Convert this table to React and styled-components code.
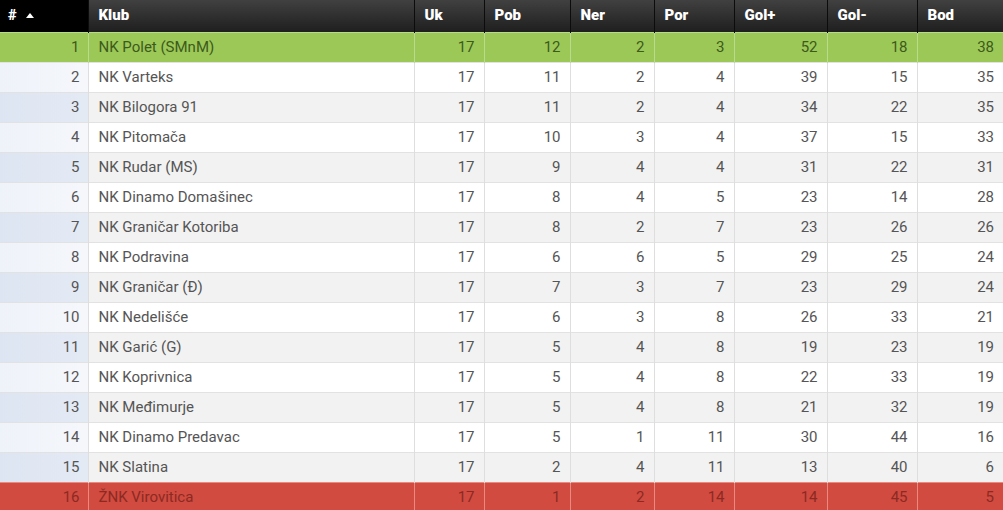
import styled, { createGlobalStyle } from "styled-components";

const GlobalStyle = createGlobalStyle`
  body {
    margin: 0;
    background: #fff;
    font-family: Roboto, "Liberation Sans", sans-serif;
  }
`;

const cols = [
  { key: "pos", label: "#", width: 88 },
  { key: "name", label: "Klub", width: 326 },
  { key: "uk", label: "Uk", width: 70 },
  { key: "pob", label: "Pob", width: 86 },
  { key: "ner", label: "Ner", width: 84 },
  { key: "por", label: "Por", width: 80 },
  { key: "gp", label: "Gol+", width: 93 },
  { key: "gm", label: "Gol-", width: 90 },
  { key: "bod", label: "Bod", width: 86 },
];

const rows = [
  ["NK Polet (SMnM)", 17, 12, 2, 3, 52, 18, 38],
  ["NK Varteks", 17, 11, 2, 4, 39, 15, 35],
  ["NK Bilogora 91", 17, 11, 2, 4, 34, 22, 35],
  ["NK Pitomača", 17, 10, 3, 4, 37, 15, 33],
  ["NK Rudar (MS)", 17, 9, 4, 4, 31, 22, 31],
  ["NK Dinamo Domašinec", 17, 8, 4, 5, 23, 14, 28],
  ["NK Graničar Kotoriba", 17, 8, 2, 7, 23, 26, 26],
  ["NK Podravina", 17, 6, 6, 5, 29, 25, 24],
  ["NK Graničar (Đ)", 17, 7, 3, 7, 23, 29, 24],
  ["NK Nedelišće", 17, 6, 3, 8, 26, 33, 21],
  ["NK Garić (G)", 17, 5, 4, 8, 19, 23, 19],
  ["NK Koprivnica", 17, 5, 4, 8, 22, 33, 19],
  ["NK Međimurje", 17, 5, 4, 8, 21, 32, 19],
  ["NK Dinamo Predavac", 17, 5, 1, 11, 30, 44, 16],
  ["NK Slatina", 17, 2, 4, 11, 13, 40, 6],
  ["ŽNK Virovitica", 17, 1, 2, 14, 14, 45, 5],
];

const Table = styled.table`
  width: 1003px;
  border-collapse: collapse;
  table-layout: fixed;
  font-size: 15px;
`;

const HeadRow = styled.tr`
  height: 32px;
`;

const HeadCell = styled.th`
  padding: 0 0 2px 10px;
  text-align: left;
  font-weight: 900;
  font-size: 15px;
  color: #fff;
  background: ${(p) =>
    p.$sorted ? "#000" : "linear-gradient(#404040, #1f1f1f)"};
  border-left: 1px solid #0c0c0c;
  &:first-child {
    border-left: none;
    padding-left: 8px;
  }
`;

const SortArrow = styled.span`
  display: inline-block;
  margin-left: 9px;
  vertical-align: 2px;
  width: 0;
  height: 0;
  border-left: 4px solid transparent;
  border-right: 4px solid transparent;
  border-bottom: 5px solid #fff;
`;

const palette = {
  promo: { bg: "#9cc857", fg: "#3c5a1c", line: "#b9db8c" },
  releg: { bg: "#d24b40", fg: "#8a2a23", line: "#e88a80" },
};

const Row = styled.tr`
  height: 30px;
`;

const Cell = styled.td`
  padding: 0 9px 0 10px;
  text-align: ${(p) => (p.$left ? "left" : "right")};
  white-space: nowrap;
  color: ${(p) => (p.$tone ? palette[p.$tone].fg : "#555")};
  background: ${(p) =>
    p.$tone ? palette[p.$tone].bg : p.$odd ? "#f2f2f2" : "#fff"};
  border-left: 1px solid ${(p) => (p.$tone ? palette[p.$tone].line : "#dedede")};
  border-top: 1px solid ${(p) => (p.$tone ? palette[p.$tone].line : "#e2e2e2")};
`;

const PosCell = styled(Cell)`
  border-left: none;
  padding-right: 8px;
  background: ${(p) =>
    p.$tone
      ? palette[p.$tone].bg
      : p.$odd
      ? "linear-gradient(90deg, #dde5f2, #e4eaf4)"
      : "linear-gradient(90deg, #eef2f9, #f5f7fb)"};
`;

export default function App() {
  return (
    <>
      <GlobalStyle />
      <Table>
        <colgroup>
          {cols.map((c) => (
            <col key={c.key} style={{ width: c.width }} />
          ))}
        </colgroup>
        <thead>
          <HeadRow>
            {cols.map((c, i) => (
              <HeadCell key={c.key} $sorted={i === 0}>
                {c.label}
                {i === 0 && <SortArrow />}
              </HeadCell>
            ))}
          </HeadRow>
        </thead>
        <tbody>
          {rows.map((r, i) => {
            const tone = i === 0 ? "promo" : i === rows.length - 1 ? "releg" : null;
            const odd = i % 2 === 0;
            return (
              <Row key={r[0]}>
                <PosCell $tone={tone} $odd={odd}>
                  {i + 1}
                </PosCell>
                <Cell $left $tone={tone} $odd={odd}>
                  {r[0]}
                </Cell>
                {r.slice(1).map((v, j) => (
                  <Cell key={j} $tone={tone} $odd={odd}>
                    {v}
                  </Cell>
                ))}
              </Row>
            );
          })}
        </tbody>
      </Table>
    </>
  );
}
